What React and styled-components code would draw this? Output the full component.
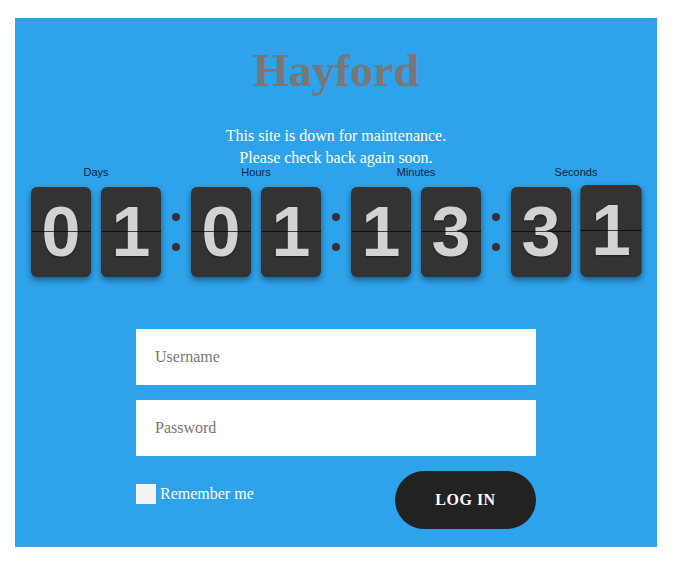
import React from "react";
import styled, { createGlobalStyle } from "styled-components";

const GlobalStyle = createGlobalStyle`
  body {
    margin: 0;
    background: #fff;
    font-family: "Liberation Serif", "Times New Roman", serif;
  }
`;

const Page = styled.div`
  padding: 18px 16px 14px 15px;
`;

const Panel = styled.div`
  width: 642px;
  background-color: #2ea3ec;
  padding: 30px 0 18px;
  box-sizing: border-box;
  display: flex;
  flex-direction: column;
  align-items: center;
`;

const Title = styled.h1`
  margin: 0;
  font-family: "Liberation Serif", "Times New Roman", serif;
  font-size: 46px;
  line-height: 46px;
  font-weight: bold;
  color: #777;
`;

const Message = styled.p`
  margin: 31px 0 0;
  font-size: 16px;
  line-height: 22px;
  color: #fff;
  text-align: center;
`;

const Clock = styled.div`
  display: flex;
  align-items: flex-end;
  width: 610px;
  margin-top: -3px;
`;

const Group = styled.div`
  display: flex;
  flex-direction: column;
  align-items: center;
`;

const Label = styled.span`
  font-family: "Liberation Sans", Arial, sans-serif;
  font-size: 11px;
  line-height: 12px;
  color: #13243c;
  margin-bottom: 9px;
`;

const Cards = styled.div`
  display: flex;
  gap: 10px;
`;

const Card = styled.div`
  position: relative;
  width: 60px;
  height: 90px;
  border-radius: 6px;
  background: #333;
  box-shadow: 0 3px 6px rgba(0, 0, 0, 0.45);
  display: flex;
  align-items: center;
  justify-content: center;
  font-family: "Liberation Sans", Arial, sans-serif;
  font-weight: bold;
  font-size: 70px;
  line-height: 1;
  color: #d2d2d2;
  text-shadow: 0 1px 2px rgba(0, 0, 0, 0.5);
  transform: ${(p) => (p.$flipping ? "scale(1.02, 1.02) translateY(-1px)" : "none")};

  &::after {
    content: "";
    position: absolute;
    left: 0;
    right: 0;
    top: 44px;
    height: 1px;
    background: rgba(0, 0, 0, 0.7);
  }
`;

const Colon = styled.div`
  width: 30px;
  height: 90px;
  display: flex;
  flex-direction: column;
  align-items: center;
  justify-content: center;
  gap: 22px;

  &::before,
  &::after {
    content: "";
    width: 8px;
    height: 8px;
    border-radius: 50%;
    background: #333;
  }
`;

const Form = styled.form`
  width: 400px;
  margin-top: 52px;
  display: flex;
  flex-direction: column;
  gap: 15px;
`;

const Input = styled.input`
  height: 56px;
  border: none;
  outline: none;
  padding: 0 19px;
  box-sizing: border-box;
  background: #fff;
  font-family: "Liberation Serif", "Times New Roman", serif;
  font-size: 16px;
  color: #333;

  &::placeholder {
    color: #777;
  }
`;

const Row = styled.div`
  display: flex;
  justify-content: space-between;
  align-items: flex-start;
`;

const Remember = styled.label`
  margin-top: 13px;
  display: flex;
  align-items: center;
  gap: 4px;
  font-size: 16px;
  line-height: 20px;
  color: #fff;
`;

const Check = styled.input`
  appearance: none;
  margin: 0;
  width: 20px;
  height: 20px;
  background: #f2f2f2;
`;

const LoginButton = styled.button`
  width: 141px;
  height: 58px;
  border: none;
  border-radius: 29px;
  background: #222;
  color: #fff;
  font-family: "Liberation Serif", "Times New Roman", serif;
  font-weight: bold;
  font-size: 16px;
  letter-spacing: 0.5px;
  padding: 0;
`;

const units = [
  { label: "Days", digits: "01" },
  { label: "Hours", digits: "01" },
  { label: "Minutes", digits: "13" },
  { label: "Seconds", digits: "31" },
];

export default function App() {
  return (
    <Page>
      <GlobalStyle />
      <Panel>
        <Title>Hayford</Title>
        <Message>
          This site is down for maintenance.
          <br />
          Please check back again soon.
        </Message>
        <Clock>
          {units.map((u, i) => (
            <React.Fragment key={u.label}>
              {i > 0 && <Colon />}
              <Group>
                <Label>{u.label}</Label>
                <Cards>
                  {u.digits.split("").map((d, j) => (
                    <Card key={j} $flipping={i === 3 && j === 1}>
                      {d}
                    </Card>
                  ))}
                </Cards>
              </Group>
            </React.Fragment>
          ))}
        </Clock>
        <Form onSubmit={(e) => e.preventDefault()}>
          <Input type="text" placeholder="Username" />
          <Input type="password" placeholder="Password" />
          <Row>
            <Remember>
              <Check type="checkbox" />
              Remember me
            </Remember>
            <LoginButton type="submit">LOG IN</LoginButton>
          </Row>
        </Form>
      </Panel>
    </Page>
  );
}
